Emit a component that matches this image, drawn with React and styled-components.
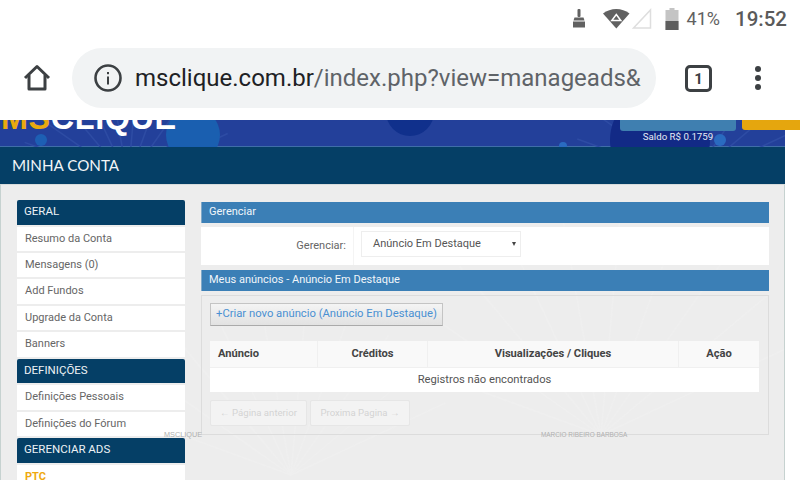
import React from 'react'
import styled, { createGlobalStyle } from 'styled-components'

const Global = createGlobalStyle`
  html, body { margin: 0; padding: 0; background: #fff; }
  * { box-sizing: border-box; }
  body { font-family: Roboto, "Liberation Sans", sans-serif; }
`

const Screen = styled.div`
  width: 800px;
  height: 480px;
  overflow: hidden;
  display: flex;
  flex-direction: column;
  background: #fff;
`
const StatusBar = styled.div`
  position: relative;
  z-index: 2;
  height: 40px;
  flex: none;
  display: flex;
  align-items: center;
  justify-content: flex-end;
  padding: 0 13px 3px 0;
  background: #fff;
  color: #616161;
`
const StatusIcon = styled.svg`
  display: block;
  flex: none;
  margin-right: ${p => p.$gap || 0}px;
`
const Percent = styled.span`
  font-size: 18px;
  margin-right: 15px;
  margin-left: 8px;
  color: #616161;
`
const Clock = styled.span`
  font-size: 20.5px;
  font-weight: 500;
  color: #5a5a5a;
`
const Toolbar = styled.div`
  position: relative;
  z-index: 2;
  height: 80px;
  flex: none;
  display: flex;
  align-items: flex-start;
  padding: 8px 0 0 22px;
  background: #fff;
`
const HomeButton = styled.svg`
  display: block;
  width: 30px;
  height: 30px;
  margin: 15px 20px 0 0;
`
const UrlPill = styled.div`
  width: 584px;
  height: 60px;
  border-radius: 30px;
  background: #f1f3f4;
  display: flex;
  align-items: center;
  padding-left: 22px;
  overflow: hidden;
  white-space: nowrap;
  font-size: 24px;
`
const InfoIcon = styled.svg`
  display: block;
  flex: none;
  margin-right: 13px;
`
const Host = styled.span`
  color: #202124;
`
const Path = styled.span`
  color: #5f6368;
`
const TabCount = styled.div`
  width: 27px;
  height: 27px;
  margin: 17px 0 0 29px;
  border: 3px solid #3c4043;
  border-radius: 5px;
  display: flex;
  align-items: center;
  justify-content: center;
  font-size: 15px;
  font-weight: 700;
  color: #3c4043;
`
const MenuDots = styled.div`
  margin: 18px 0 0 43px;
  display: flex;
  flex-direction: column;
  gap: 3px;
`
const Dot = styled.span`
  width: 6px;
  height: 6px;
  border-radius: 50%;
  background: #3c4043;
`

const Page = styled.div`
  width: 785px;
  flex: 1;
  display: flex;
  flex-direction: column;
  min-height: 0;
`
const Banner = styled.div`
  position: relative;
  height: 27px;
  flex: none;
  background: #23409a;
  display: flex;
  justify-content: space-between;
  align-items: flex-start;
  border-bottom: 1px solid #3f6ea8;
`
const BannerArt = styled.svg`
  position: absolute;
  left: 0;
  top: 0;
`
const Logo = styled.div`
  position: relative;
  margin: -15px 0 0 1px;
  font-family: "Liberation Sans", sans-serif;
  font-size: 32.4px;
  font-weight: 700;
  line-height: 26px;
  letter-spacing: 0.6px;
  color: #fff;
`
const LogoAccent = styled.span`
  color: #e9a90f;
`
const BannerRight = styled.div`
  position: relative;
  margin-right: -15px;
  display: flex;
  gap: 6px;
  align-items: flex-start;
`
const Balance = styled.div`
  width: 116px;
  display: flex;
  flex-direction: column;
  align-items: center;
`
const BalanceButton = styled.div`
  width: 116px;
  height: 11px;
  background: #3f7fb0;
  border-radius: 0 0 3px 3px;
`
const BalanceText = styled.div`
  font-size: 9.7px;
  line-height: 11px;
  color: #e6ecf5;
  white-space: nowrap;
`
const GoldButton = styled.div`
  width: 58px;
  height: 10px;
  background: #e5a60e;
  border-radius: 0 0 0 3px;
`
const TitleBar = styled.div`
  height: 37px;
  flex: none;
  background: #053f66;
  color: #f2f5f7;
  font-family: Lato, sans-serif;
  font-size: 15.2px;
  line-height: 37px;
  padding-left: 12px;
`
const Content = styled.div`
  position: relative;
  flex: 1;
  min-height: 0;
  overflow: hidden;
  background: #ededed;
  border-left: 1px solid #c6d2d0;
  border-right: 1px solid #c6d2d0;
  border-top: 1px solid #d8dcdc;
  padding: 15px 15px 0 16px;
  display: flex;
  gap: 16px;
  align-items: flex-start;
`
const ContentArt = styled.svg`
  position: absolute;
  left: 0;
  top: 0;
  pointer-events: none;
`
const Sidebar = styled.div`
  position: relative;
  z-index: 1;
  width: 168px;
  flex: none;
  display: flex;
  flex-direction: column;
`
const SideHead = styled.div`
  height: 24.5px;
  margin-bottom: 2px;
  background: #053f66;
  border-radius: 2px 2px 0 0;
  color: #eef2f5;
  font-size: 11.5px;
  line-height: 23px;
  padding-left: 7px;
`
const SideItem = styled.div`
  height: 24.3px;
  margin-bottom: 2.2px;
  background: #fff;
  color: ${p => (p.$accent ? '#efa90f' : '#666')};
  font-size: 11px;
  font-weight: ${p => (p.$accent ? 700 : 400)};
  line-height: 24px;
  padding-left: 8px;
`
const Main = styled.div`
  position: relative;
  z-index: 1;
  width: 568px;
  flex: none;
  padding-top: 2px;
`
const SectionBar = styled.div`
  height: 21px;
  background: #3b7fb6;
  color: #f1f6fa;
  font-size: 11px;
  line-height: 19px;
  padding-left: 7px;
  border-left: 1px solid #7fa8c8;
`
const FormRow = styled.div`
  height: 38px;
  margin: 4px 0 5px;
  background: #fff;
  display: flex;
  align-items: flex-start;
  color: #666;
  font-size: 11px;
`
const FormLabel = styled.div`
  width: 153px;
  height: 100%;
  padding: 0 7px 1px 0;
  display: flex;
  align-items: center;
  justify-content: flex-end;
  border-right: 1px solid #f4f4f4;
`
const FakeSelect = styled.div`
  width: 160px;
  height: 26px;
  margin: 4px 0 0 7px;
  border: 1px solid #eee;
  display: flex;
  align-items: center;
  justify-content: space-between;
  padding: 0 4px 2px 11px;
  color: #555;
`
const Caret = styled.span`
  width: 0;
  height: 0;
  border-left: 2.5px solid transparent;
  border-right: 2.5px solid transparent;
  border-top: 4px solid #444;
  margin-top: 2px;
`
const Panel = styled.div`
  height: 140px;
  margin-top: 4px;
  border: 1.5px solid #dcdcdc;
  padding: 7px 8px 0;
`
const NewButton = styled.div`
  width: 233px;
  height: 23px;
  background: linear-gradient(#f4f4f4, #e2e2e2);
  border: 1px solid #c4c4c4;
  border-bottom-color: #aaa;
  color: #4a90d2;
  font-size: 11.25px;
  line-height: 20px;
  padding-left: 5px;
  white-space: nowrap;
`
const Table = styled.div`
  margin-top: 15px;
  width: 549px;
  background: #fff;
`
const HeadRow = styled.div`
  height: 27px;
  display: grid;
  grid-template-columns: 108px 110px 251px 80px;
  background: #f9f9f9;
  border-bottom: 1px solid #f0f0f0;
`
const HeadCell = styled.div`
  font-size: 11.15px;
  font-weight: 700;
  color: #444;
  line-height: 26px;
  text-align: ${p => (p.$left ? 'left' : 'center')};
  padding-left: ${p => (p.$left ? '8px' : 0)};
  border-right: ${p => (p.$last ? 'none' : '1px solid #f0f0f0')};
`
const EmptyRow = styled.div`
  height: 24px;
  font-size: 11.2px;
  color: #555;
  line-height: 23px;
  text-align: center;
`
const Pager = styled.div`
  margin-top: 8px;
  display: flex;
  gap: 3px;
`
const PageButton = styled.div`
  width: ${p => p.$w}px;
  height: 26px;
  border: 1px solid #e6e6e6;
  border-radius: 2px;
  background: #f3f3f3;
  color: #d4d4d4;
  font-size: 9.6px;
  line-height: 24px;
  text-align: center;
  white-space: nowrap;
`
const Stamp = styled.div`
  position: absolute;
  z-index: 2;
  top: 245px;
  left: ${p => p.$x}px;
  font-family: "Liberation Sans", sans-serif;
  font-size: ${p => p.$size}px;
  line-height: 10px;
  color: #b0b0b0;
  white-space: nowrap;
`

const rayAngles = [200, 215, 230, 245, 260, 275, 290, 305, 320, 335]

const Rays = ({ cx, cy, len, color }) => (
  <g stroke={color} strokeWidth="1.5">
    {rayAngles.map(a => (
      <line
        key={a}
        x1={cx}
        y1={cy}
        x2={cx + len * Math.cos((a * Math.PI) / 180)}
        y2={cy + len * Math.sin((a * Math.PI) / 180)}
      />
    ))}
  </g>
)

const sideGroups = [
  { head: 'GERAL', items: ['Resumo da Conta', 'Mensagens (0)', 'Add Fundos', 'Upgrade da Conta', 'Banners'] },
  { head: 'DEFINIÇÕES', items: ['Definições Pessoais', 'Definições do Fórum'] },
  { head: 'GERENCIAR ADS', items: [] },
]

export default function App() {
  return (
    <Screen>
      <Global />
      <StatusBar>
        <StatusIcon width="16" height="22" viewBox="0 0 16 22" $gap={16} fill="#616161">
          <rect x="6.5" y="1" width="3" height="8" rx="1" />
          <path d="M3.5 9.5h9l1 3h-11z" />
          <path d="M2 13.5h12v6H2z" />
        </StatusIcon>
        <StatusIcon width="28" height="22" viewBox="0 0 28 22" $gap={1}>
          <path d="M0 5.5C7.5 -0.5 19 -0.5 26.5 5.5L13.3 20.5z" fill="#616161" />
          <path d="M13.3 6.5l4.5 6h-9z" fill="none" stroke="#fff" strokeWidth="1.5" />
        </StatusIcon>
        <StatusIcon width="20" height="22" viewBox="0 0 20 22" $gap={13}>
          <path d="M1.5 20L18.5 2v18z" fill="none" stroke="#dedede" strokeWidth="1.5" />
        </StatusIcon>
        <StatusIcon width="14" height="22" viewBox="0 0 14 22">
          <path d="M4.5 0h5v2h4v20H.5V2h4z" fill="#c4c4c4" />
          <rect x="0.5" y="13" width="13" height="9" fill="#5e5e5e" />
        </StatusIcon>
        <Percent>41%</Percent>
        <Clock>19:52</Clock>
      </StatusBar>

      <Toolbar>
        <HomeButton viewBox="0 0 30 30" fill="none" stroke="#3c4043" strokeWidth="3" strokeLinejoin="round">
          <path d="M3 15L15 3.5 27 15" />
          <path d="M7 12v14h16V12" />
        </HomeButton>
        <UrlPill>
          <InfoIcon width="28" height="28" viewBox="0 0 28 28" fill="none">
            <circle cx="14" cy="14" r="12.5" stroke="#3c4043" strokeWidth="2.6" />
            <rect x="13" y="12.5" width="2" height="8" fill="#3c4043" />
            <rect x="13" y="8" width="2" height="2.2" fill="#3c4043" />
          </InfoIcon>
          <Host>msclique.com.br</Host>
          <Path>/index.php?view=manageads&amp;</Path>
        </UrlPill>
        <TabCount>1</TabCount>
        <MenuDots>
          <Dot />
          <Dot />
          <Dot />
        </MenuDots>
      </Toolbar>

      <Page>
        <Banner>
          <BannerArt width="785" height="27" viewBox="0 0 785 27">
            <Rays cx={128} cy={60} len={110} color="#2e4ca4" />
            <Rays cx={690} cy={60} len={120} color="#2e4ca4" />
            <circle cx="41" cy="20" r="6" fill="#1d5fb4" />
            <circle cx="193" cy="15" r="27" fill="#1a5fb0" />
            <circle cx="410" cy="-8" r="24" fill="#10308c" />
            <circle cx="660" cy="20" r="50" fill="#122a86" />
            <circle cx="720" cy="20" r="6" fill="#2a6bc0" />
            <circle cx="563" cy="26" r="4" fill="#2a6bc0" />
          </BannerArt>
          <Logo>
            <LogoAccent>MS</LogoAccent>CLIQUE
          </Logo>
          <BannerRight>
            <Balance>
              <BalanceButton />
              <BalanceText>Saldo R$ 0.1759</BalanceText>
            </Balance>
            <GoldButton />
          </BannerRight>
        </Banner>
        <TitleBar>MINHA CONTA</TitleBar>
        <Content>
          <ContentArt width="785" height="296" viewBox="0 0 785 296">
            <Rays cx={290} cy={290} len={170} color="#efefef" />
            <Rays cx={600} cy={250} len={220} color="#efefef" />
          </ContentArt>
          <Sidebar>
            {sideGroups.map(group => (
              <React.Fragment key={group.head}>
                <SideHead>{group.head}</SideHead>
                {group.items.map(item => (
                  <SideItem key={item}>{item}</SideItem>
                ))}
              </React.Fragment>
            ))}
            <SideItem $accent>PTC</SideItem>
          </Sidebar>
          <Main>
            <SectionBar>Gerenciar</SectionBar>
            <FormRow>
              <FormLabel>Gerenciar:</FormLabel>
              <FakeSelect>
                Anúncio Em Destaque
                <Caret />
              </FakeSelect>
            </FormRow>
            <SectionBar>Meus anúncios - Anúncio Em Destaque</SectionBar>
            <Panel>
              <NewButton>+Criar novo anúncio (Anúncio Em Destaque)</NewButton>
              <Table>
                <HeadRow>
                  <HeadCell $left>Anúncio</HeadCell>
                  <HeadCell>Créditos</HeadCell>
                  <HeadCell>Visualizações / Cliques</HeadCell>
                  <HeadCell $last>Ação</HeadCell>
                </HeadRow>
                <EmptyRow>Registros não encontrados</EmptyRow>
              </Table>
              <Pager>
                <PageButton $w={97}>← Página anterior</PageButton>
                <PageButton $w={100}>Proxima Pagina →</PageButton>
              </Pager>
            </Panel>
          </Main>
          <Stamp $x={163} $size={7.3}>MSCLIQUE</Stamp>
          <Stamp $x={540} $size={6.4}>MARCIO RIBEIRO BARBOSA</Stamp>
        </Content>
      </Page>
    </Screen>
  )
}
